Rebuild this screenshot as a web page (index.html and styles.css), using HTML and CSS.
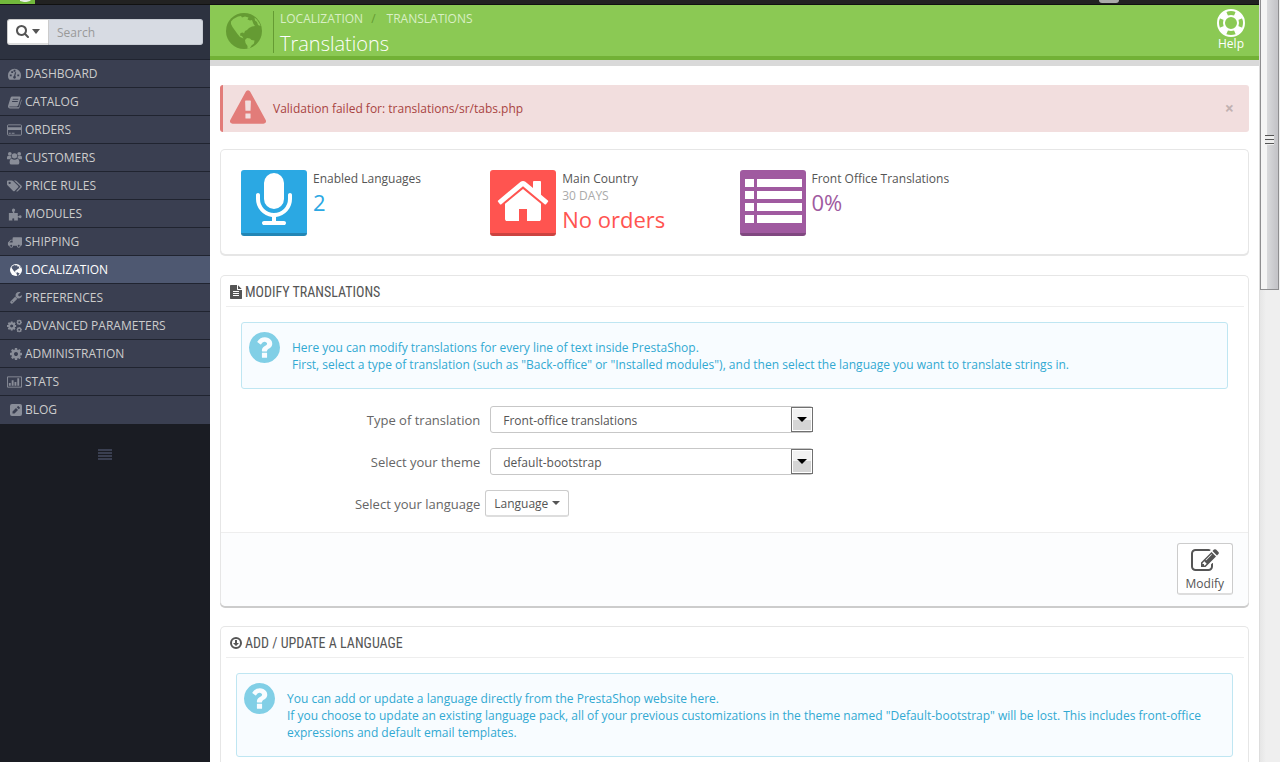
FILE: index.html
```html
<!DOCTYPE html>
<html lang="en">
<head>
    <meta charset="utf-8">
    <title>Translations</title>
    <link rel="stylesheet" href="styles.css">
</head>
<body>
    <svg class="sprite" aria-hidden="true">
        <symbol id="globe" viewBox="0 0 36 36">
            <circle cx="18" cy="18" r="18" fill="currentColor"/>
            <path class="land" d="M5 8.500Q8 5 12 3.500l3-.5 1 1.500 3-1 3.500 1-1 2 2.500 1 2-.5 1.500 4 1.500 2-3 .5-3 1.500-2 2-2 1-1 2.500-1-1-2.500.5-.5 2.500 2 .5 1.500 2.500-3.500-1.500-2.500-3L9 17.500 6.500 14 5 11zM19 27l2-2 3 .5 1.500 1.500 3 .5-.5 3-2.500 2-1.500 2.500-2.500 1 0-3-2-3zM28.500 4.500Q33 8 34.500 13l-2.500-1-1-3-2-1.500z"/>
        </symbol>
        <symbol id="question" viewBox="128 128 1536 1536">
            <path fill="currentColor" d="M1024 1376v-192q0-14-9-23t-23-9h-192q-14 0-23 9t-9 23v192q0 14 9 23t23 9h192q14 0 23-9t9-23zm256-672q0-88-55.5-163t-138.5-116-170-41q-243 0-371 213-15 24 8 42l132 100q7 6 19 6 16 0 25-12 53-68 86-92 34-24 86-24 48 0 85.5 26t37.5 59q0 38-20 61t-68 45q-63 28-115.5 86.5t-52.5 125.5v36q0 14 9 23t23 9h192q14 0 23-9t9-23q0-19 21.5-49.5t54.5-49.5q32-18 49-28.5t46-35 44.5-48 28-60.5 12.5-81zm384 192q0 209-103 385.5t-279.5 279.5-385.5 103-385.5-103-279.5-279.5-103-385.5 103-385.5 279.5-279.5 385.5-103 385.5 103 279.5 279.5 103 385.5z"/>
        </symbol>
        <symbol id="cog" viewBox="128 128 1536 1536">
            <path fill="currentColor" d="M1152 896q0-106-75-181t-181-75-181 75-75 181 75 181 181 75 181-75 75-181zm512-109v222q0 12-8 23t-20 13l-185 28q-19 54-39 91 35 50 107 138 10 12 10 25t-9 23q-27 37-99 108t-94 71q-12 0-26-9l-138-108q-44 23-91 38-16 136-29 186-7 28-36 28h-222q-14 0-24.5-8.5t-11.5-21.5l-28-184q-49-16-90-37l-141 107q-10 9-25 9-14 0-25-11-126-114-165-168-7-10-7-23 0-12 8-23 15-21 51-66.5t54-70.5q-27-50-41-99l-183-27q-13-2-21-12.5t-8-23.5v-222q0-12 8-23t19-13l186-28q14-46 39-92-40-57-107-138-10-12-10-24 0-10 9-23 26-36 98.5-107.5t94.5-71.5q13 0 26 10l138 107q44-23 91-38 16-136 29-186 7-28 36-28h222q14 0 24.5 8.5t11.5 21.5l28 184q49 16 90 37l142-107q9-9 24-9 13 0 25 10 129 119 165 170 7 8 7 22 0 12-8 23-15 21-51 66.5t-54 70.5q26 50 41 98l183 28q13 2 21 12.5t8 23.5z"/>
        </symbol>
    </svg>

    <div class="topbar">
        <span class="logo"><svg viewBox="0 0 35 4"><path d="M20 0h11q-2 2-7 2l-4-1z" fill="#e9efe4"/></svg></span>
        <span class="avatar"></span>
    </div>

    <div class="layout">
        <nav class="sidebar">
            <form class="search">
                <button type="button" class="search-type" aria-label="Search in">
                    <svg width="13" height="13" viewBox="64 128 1664 1664"><path fill="currentColor" d="M1216 832q0-185-131.5-316.5t-316.5-131.5-316.5 131.5-131.5 316.5 131.5 316.5 316.5 131.5 316.5-131.5 131.5-316.5zm512 832q0 52-38 90t-90 38q-54 0-90-38l-343-342q-179 124-399 124-143 0-273.5-55.5t-225-150-150-225-55.5-273.5 55.5-273.5 150-225 225-150 273.5-55.5 273.5 55.5 225 150 150 225 55.5 273.5q0 220-124 399l343 343q37 37 37 90z"/></svg>
                    <span class="caret"></span>
                </button>
                <input type="text" placeholder="Search" aria-label="Search">
            </form>
            <ul class="menu">
                <li><a href="#"><svg viewBox="0 0 16 14"><path fill-rule="evenodd" fill="currentColor" d="M8 1.500a7 7 0 0 1 7 7q0 2.200-1.200 4.100-.2.400-.6.400H2.800q-.4 0-.6-.4A7 7 0 0 1 1 8.500a7 7 0 0 1 7-7zM3 7.500v2h2v-2zM4.500 4v2h2V4zM7 2.500v2h2v-2zM11 7.500v2h2v-2zM8.500 5l-1 4q-1 .5-1 1.500a1.500 1.500 0 0 0 3 0q0-.8-.7-1.300l1-4z"/></svg>DASHBOARD</a></li>
                <li><a href="#"><svg viewBox="0 0 16 14"><path fill-rule="evenodd" fill="currentColor" d="M5.500 1H13.500q1.300.3 1 1.500l-2.500 8q-.5 1.200-1.500 1.200H3q-.8 0-.6.6.2.400 1 .4h8.200q1 0 1.400-1L15.300 4q.5 1 .2 1.800L13.200 13q-.4 1-1.400 1H3Q1 13.500 1 11.500L3.800 2.500Q4.300 1 5.500 1zM6.300 3.500L6 4.500h6l.3-1zM5.600 6l-.3 1h6l.3-1z"/></svg>CATALOG</a></li>
                <li><a href="#"><svg viewBox="0 0 16 14"><path d="M1.500 1.500h13q1 0 1 1v9q0 1-1 1h-13q-1 0-1-1v-9q0-1 1-1z" fill="none" stroke="currentColor"/><path fill="currentColor" d="M1 4h14v3H1zM2 10h2v1H2zM5 10h3v1H5z"/></svg>ORDERS</a></li>
                <li><a href="#"><svg viewBox="0 0 16 14"><g fill="currentColor"><circle cx="3" cy="2.500" r="2"/><circle cx="13" cy="2.500" r="2"/><path d="M0 8V6.500Q0 4.500 1.400 4.500L4.500 5 4.700 7Q3.600 7.300 3 8.300L1 8.400Q0 8.400 0 8zM16 8V6.500q0-2-1.400-2L11.500 5l-.2 2q1.100.3 1.700 1.300l2 .1q1 0 1-.4z"/><circle cx="8" cy="4.700" r="2.900"/><path d="M4.800 7.500Q8 10 11.200 7.500q2 .7 2 4.500 0 2-2 2H4.800q-2 0-2-2 0-3.800 2-4.500z"/></g></svg>CUSTOMERS</a></li>
                <li><a href="#"><svg viewBox="0 0 16 14"><path fill-rule="evenodd" fill="currentColor" d="M0 2q0-1 1-1h4q1 0 1.800.8l5 5q.9.900 0 1.800l-3.600 3.600q-.8.800-1.700 0l-5.700-5.700Q0 5.800 0 5zM2.800 2.500a1.200 1.200 0 1 0 .01 0zM7.500 1H9q.8 0 1.500.8l5 5q.9.900 0 1.800l-4 4q-.9.600-1.700-.1l4-4.100q.8-.8 0-1.500z"/></svg>PRICE RULES</a></li>
                <li><a href="#"><svg viewBox="0 0 16 14"><path fill="currentColor" d="M2 6h4q.6-.1.2-1Q5 3.800 5.300 2.500 6 1 7 1q1.500.1 1.700 1.500 0 1.200-.9 2-.5 1 .4 1.300l3.300.2v3q.2.700 1 .2 1-1 2-.8 1 .2 1.100 1.500-.1 1.400-1.300 1.500-1 0-1.600-.7-1-.7-1.200.2l.1 3.100H7.800q-.6-.2-.2-1 .9-1.400-.9-1.600-1.800.2-1 1.600.6.800-.2 1H2z"/></svg>MODULES</a></li>
                <li><a href="#"><svg viewBox="0 0 16 14"><path fill-rule="evenodd" fill="currentColor" d="M7 2h8.300q.7 0 .7.700V10q0 1-1.500 1a2 2 0 0 1-4 0H6.500a2 2 0 0 1-4 0H2q-1 0-1-1V7.500L3.500 5 4 4.500h2V2.700Q6 2 7 2zM2.500 7.500H6v-2H4.400zM4.500 10a1 1 0 1 0 .01 0zM12.500 10a1 1 0 1 0 .01 0z"/></svg>SHIPPING</a></li>
                <li class="active"><a href="#"><svg class="small"><use href="#globe"/></svg>LOCALIZATION</a></li>
                <li><a href="#"><svg class="small" viewBox="64 128 1664 1664"><path fill="currentColor" d="M448 1472q0-26-19-45t-45-19-45 19-19 45 19 45 45 19 45-19 19-45zm644-420l-682 682q-37 37-90 37-52 0-91-37l-106-108q-38-36-38-90 0-53 38-91l681-681q39 98 114.500 173.500t173.500 114.500zm634-435q0 39-23 106-47 134-164.500 217.500t-258.500 83.500q-185 0-316.500-131.500t-131.500-316.500 131.500-316.500 316.500-131.500q58 0 121.500 16.500t107.500 46.500q16 11 16 28t-16 28l-293 169v224l193 107q5-3 79-48.500t135.500-81 70.500-35.500q15 0 23.500 10t8.500 25z"/></svg>PREFERENCES</a></li>
                <li><a href="#"><svg viewBox="0 0 16 14"><use href="#cog" x="0" y="2" width="10" height="10"/><use href="#cog" x="10" y="0" width="6" height="6"/><use href="#cog" x="10" y="8" width="6" height="6"/></svg>ADVANCED PARAMETERS</a></li>
                <li><a href="#"><svg class="small"><use href="#cog"/></svg>ADMINISTRATION</a></li>
                <li><a href="#"><svg viewBox="0 0 16 14"><path d="M.5 1.500h15v11H.5z" fill="none" stroke="currentColor"/><path fill="currentColor" d="M2 8h2v3H2zM5 5h2v6H5zM8 7h2v4H8zM11 3h2v8h-2z"/></svg>STATS</a></li>
                <li><a href="#"><svg class="small" viewBox="0 0 12 12"><path fill-rule="evenodd" fill="currentColor" d="M2 0h8q2 0 2 2v8q0 2-2 2H2q-2 0-2-2V2q0-2 2-2zM2.500 7.500v2h2L8 6 6 4zM6.800 3.200l2 2 1-1q.4-.4 0-.8L8.600 2.200q-.4-.4-.8 0z"/></svg>BLOG</a></li>
            </ul>
            <button type="button" class="collapse" aria-label="Collapse menu"><span></span></button>
        </nav>

        <main class="main">
            <header class="page-head">
                <svg class="head-icon"><use href="#globe"/></svg>
                <div class="head-title">
                    <div class="breadcrumb"><a href="#">LOCALIZATION</a><span>/</span><a href="#">TRANSLATIONS</a></div>
                    <h1>Translations</h1>
                </div>
                <a href="#" class="help">
                    <svg width="28" height="28" viewBox="0 0 28 28" fill="none" stroke="currentColor"><circle cx="14" cy="14" r="13" stroke-width="2"/><circle cx="14" cy="14" r="7" stroke-width="2"/><circle cx="14" cy="14" r="10" stroke-width="6" pathLength="8" stroke-dasharray="1 1" stroke-dashoffset="-.5"/></svg>
                    Help
                </a>
            </header>

            <div class="content">
                <div class="alert">
                    <svg width="36" height="34" viewBox="0 0 1792 1664"><path fill="currentColor" d="M1024 1375v-190q0-14-9.500-23.500t-22.500-9.500h-192q-13 0-22.500 9.500t-9.500 23.500v190q0 14 9.500 23.500t22.500 9.500h192q13 0 22.500-9.500t9.500-23.500zm-2-374l18-459q0-12-10-19-13-11-24-11h-220q-11 0-24 11-10 7-10 21l17 457q0 10 10 16.500t24 6.500h185q14 0 23.500-6.500t10.500-16.500zm-14-934l768 1408q35 63-2 126-17 29-46.500 46t-63.500 17h-1536q-34 0-63.500-17t-46.500-46q-37-63-2-126l768-1408q17-31 47-49t65-18 65 18 47 49z"/></svg>
                    <span>Validation failed for: translations/sr/tabs.php</span>
                    <button type="button" class="close" aria-label="Close">×</button>
                </div>

                <section class="panel kpis">
                    <div class="kpi blue">
                        <div class="kpi-icon"><svg width="56" height="56" viewBox="0 0 1792 1792"><path fill="currentColor" d="M1472 704v128q0 221-147.500 384.500t-364.500 187.500v132h256q26 0 45 19t19 45-19 45-45 19h-640q-26 0-45-19t-19-45 19-45 45-19h256v-132q-217-24-364.500-187.500t-147.500-384.500v-128q0-26 19-45t45-19 45 19 19 45v128q0 185 131.500 316.500t316.500 131.500 316.500-131.500 131.500-316.500v-128q0-26 19-45t45-19 45 19 19 45zm-256-384v512q0 132-94 226t-226 94-226-94-94-226v-512q0-132 94-226t226-94 226 94 94 226z"/></svg></div>
                        <div><div class="kpi-title">Enabled Languages</div><div class="kpi-value">2</div></div>
                    </div>
                    <div class="kpi red">
                        <div class="kpi-icon"><svg width="56" height="56" viewBox="0 0 1792 1792"><path fill="currentColor" d="M1472 992v480q0 26-19 45t-45 19h-384v-384h-256v384h-384q-26 0-45-19t-19-45v-480q0-1 .5-3t.5-3l575-474 575 474q1 2 1 6zm223-69l-62 74q-8 9-21 11h-3q-13 0-21-7l-692-577-692 577q-12 8-24 7-13-2-21-11l-62-74q-8-10-7-23.500t11-21.500l719-599q32-26 76-26t76 26l244 204v-195q0-14 9-23t23-9h192q14 0 23 9t9 23v408l219 182q10 8 11 21.500t-7 23.500z"/></svg></div>
                        <div><div class="kpi-title">Main Country</div><div class="kpi-sub">30 DAYS</div><div class="kpi-value">No orders</div></div>
                    </div>
                    <div class="kpi purple">
                        <div class="kpi-icon"><svg width="58" height="46" viewBox="0 0 58 46"><path fill="currentColor" d="M1 1h9v8H1zM13 1h45v8H13zM1 13h9v8H1zM13 13h45v8H13zM1 25h9v8H1zM13 25h45v8H13zM1 37h9v8H1zM13 37h45v8H13z"/></svg></div>
                        <div><div class="kpi-title">Front Office Translations</div><div class="kpi-value">0%</div></div>
                    </div>
                </section>

                <form class="panel">
                    <h2><svg width="12" height="14" viewBox="128 0 1536 1792"><path fill="currentColor" d="M1596 476q14 14 28 36h-472v-472q22 14 36 28zm-476 164h544v1056q0 40-28 68t-68 28h-1344q-40 0-68-28t-28-68v-1600q0-40 28-68t68-28h800v544q0 40 28 68t68 28zm160 736v-64q0-14-9-23t-23-9h-704q-14 0-23 9t-9 23v64q0 14 9 23t23 9h704q14 0 23-9t9-23zm0-256v-64q0-14-9-23t-23-9h-704q-14 0-23 9t-9 23v64q0 14 9 23t23 9h704q14 0 23-9t9-23zm0-256v-64q0-14-9-23t-23-9h-704q-14 0-23 9t-9 23v64q0 14 9 23t23 9h704q14 0 23-9t9-23z"/></svg>MODIFY TRANSLATIONS</h2>
                    <div class="panel-body inset">
                        <div class="info">
                            <svg width="31" height="31"><use href="#question"/></svg>
                            <p>Here you can modify translations for every line of text inside PrestaShop.<br>First, select a type of translation (such as "Back-office" or "Installed modules"), and then select the language you want to translate strings in.</p>
                        </div>
                    </div>
                    <div class="fields">
                        <div class="field">
                            <label for="type">Type of translation</label>
                            <div class="select"><select id="type"><option>Front-office translations</option></select></div>
                        </div>
                        <div class="field">
                            <label for="theme">Select your theme</label>
                            <div class="select"><select id="theme"><option>default-bootstrap</option></select></div>
                        </div>
                        <div class="field">
                            <label for="language">Select your language</label>
                            <div><button type="button" id="language" class="btn" aria-label="Language">Language <span class="caret"></span></button></div>
                        </div>
                    </div>
                    <footer class="panel-footer">
                        <button type="button" class="btn modify">
                            <svg width="28" height="28" viewBox="0 0 1792 1792"><path fill="currentColor" d="M888 1184l116-116-152-152-116 116v56h96v96h56zm440-720q-16-16-33 1l-350 350q-17 17-1 33t33-1l350-350q17-17 1-33zm80 594v190q0 119-84.500 203.500t-203.500 84.500h-832q-119 0-203.500-84.500t-84.500-203.500v-832q0-119 84.500-203.500t203.500-84.500h832q63 0 117 25 15 7 18 23 3 17-9 29l-49 49q-14 14-32 8-23-6-45-6h-832q-66 0-113 47t-47 113v832q0 66 47 113t113 47h832q66 0 113-47t47-113v-126q0-13 9-22l64-64q15-15 35-7t20 29zm-96-738l288 288-672 672h-288v-288zm444 132l-92 92-288-288 92-92q28-28 68-28t68 28l152 152q28 28 28 68t-28 68z"/></svg>
                            Modify
                        </button>
                    </footer>
                </form>

                <section class="panel">
                    <h2><svg width="12" height="12" viewBox="0 0 12 12"><circle cx="6" cy="6" r="5" fill="none" stroke="currentColor" stroke-width="2"/><path fill="currentColor" d="M5 3h2v3h2L6 9 3 6h2z"/></svg>ADD / UPDATE A LANGUAGE</h2>
                    <div class="panel-body">
                        <div class="info">
                            <svg width="31" height="31"><use href="#question"/></svg>
                            <p>You can add or update a language directly from the PrestaShop website here.<br>If you choose to update an existing language pack, all of your previous customizations in the theme named "Default-bootstrap" will be lost. This includes front-office expressions and default email templates.</p>
                        </div>
                    </div>
                </section>
            </div>
        </main>

        <div class="scrollbar"><div class="thumb"><span></span></div></div>
    </div>
</body>
</html>
```

FILE: styles.css
```css
:root {
    --text: #555;
    --green: #8bc954;
    --green-dark: #72b136;
    --menu: #3a3f51;
    --line: #e6e6e6;
}

*, *::before, *::after {
    box-sizing: border-box;
}

body {
    margin: 0;
    height: 100vh;
    display: flex;
    flex-direction: column;
    overflow: hidden;
    font-family: "Open Sans", "Noto Sans", sans-serif;
    font-size: 12px;
    line-height: 17px;
    color: var(--text);
    background: #fff;
}

button, input, select {
    font: inherit;
    color: inherit;
}

a {
    color: inherit;
    text-decoration: none;
}

svg {
    display: block;
    flex: none;
}

.sprite {
    position: absolute;
    width: 0;
    height: 0;
}

.land {
    fill: var(--land);
}

.caret {
    display: inline-block;
    border: 4px solid transparent;
    border-top-color: currentColor;
    border-bottom: 0;
}

/* top bar */
.topbar {
    flex: none;
    display: flex;
    justify-content: space-between;
    height: 5px;
    background: #222;
    border-bottom: 1px solid #111;
}

.logo {
    width: 35px;
    height: 4px;
    background: #72b93c;
}

.avatar {
    width: 20px;
    height: 3px;
    margin-right: 161px;
    border-radius: 0 0 10px 10px;
    background: #aaa;
}

.layout {
    flex: 1;
    min-height: 0;
    display: flex;
}

/* sidebar */
.sidebar {
    flex: none;
    width: 210px;
    background: #1a1c23;
}

.search {
    display: flex;
    height: 55px;
    padding: 14px 7px;
    background: #2d3240;
    border-bottom: 1px solid #202430;
}

.search-type {
    display: flex;
    align-items: center;
    gap: 3px;
    width: 42px;
    padding: 0 8px;
    border: 1px solid #ccc;
    border-bottom: 2px solid #ddd;
    border-radius: 3px 0 0 3px;
    background: #fff;
}

.search-type .caret {
    border-width: 5px 4px 0;
}

.search input {
    flex: 1;
    min-width: 0;
    padding: 0 8px;
    border: 1px solid #c7cbd3;
    border-left: 0;
    border-radius: 0 3px 3px 0;
    background: #d7dbe3;
}

.search input::placeholder {
    color: #999;
}

.menu {
    margin: 0;
    padding: 0;
    list-style: none;
}

.menu a {
    display: flex;
    align-items: center;
    gap: 3px;
    height: 28px;
    padding: 0 7px;
    background: var(--menu);
    border-bottom: 1px solid #202430;
    color: #ccc;
}

.menu li:last-child a {
    border-bottom-color: var(--menu);
}

.menu svg {
    width: 15px;
    height: 14px;
    color: #898d98;
}

.menu .small {
    width: 12px;
    height: 12px;
    margin-left: 3px;
}

.menu .active a {
    --land: #4e5871;
    background: #4e5871;
    color: #fff;
}

.menu .active svg {
    color: #fff;
}

.collapse {
    display: block;
    margin: 25px auto 0;
    padding: 0;
    border: 0;
    background: none;
}

.collapse span {
    display: block;
    width: 14px;
    height: 11px;
    background: repeating-linear-gradient(#3a3f51 0 2px, transparent 2px 3px);
}

/* page head */
.main {
    flex: 1;
    min-width: 0;
}

.page-head {
    --land: var(--green);
    display: flex;
    height: 55px;
    padding: 0 14px 0 16px;
    background: var(--green);
    border-bottom: 4px solid var(--green-dark);
    box-shadow: 0 6px #d9d9d9;
    color: #fff;
}

.head-icon {
    width: 36px;
    height: 36px;
    margin: 8px 11px 0 0;
    color: #659b33;
}

.head-title {
    flex: 1;
    height: 42px;
    margin-top: 6px;
    padding-left: 6px;
    border-left: 1px solid #659b33;
}

.breadcrumb {
    height: 17px;
    line-height: 16px;
    color: #d9efc5;
}

.breadcrumb span {
    padding: 0 11px 0 8px;
    color: #659b33;
}

h1 {
    margin: 0;
    font-size: 20px;
    font-weight: 300;
    line-height: 32px;
}

.help {
    display: flex;
    flex-direction: column;
    align-items: center;
    padding-top: 4px;
    line-height: 14px;
}

/* content */
.content {
    padding: 25px 10px 0;
}

.alert {
    display: flex;
    align-items: center;
    gap: 7px;
    height: 47px;
    margin-bottom: 17px;
    padding: 0 15px 0 7px;
    border-left: 3px solid #e27c79;
    border-radius: 3px;
    background: #f2dede;
    color: #a94442;
}

.alert svg {
    color: #e27c79;
    margin-bottom: 3px;
}

.close {
    margin-left: auto;
    padding: 0;
    border: 0;
    background: none;
    font-size: 16px;
    font-weight: 700;
    color: #c1b1b1;
}

.panel {
    margin-bottom: 20px;
    border: 1px solid var(--line);
    border-bottom: 0;
    border-radius: 5px;
    box-shadow: 0 2px #ccc;
    background: #fff;
}

.kpis {
    display: grid;
    grid-template-columns: repeat(4, 1fr);
    padding: 20px 15px 18px;
    box-shadow: 0 2px var(--line);
    margin-bottom: 21px;
}

.kpi {
    display: flex;
    gap: 6px;
    padding: 0 5px;
}

.kpi-icon {
    display: flex;
    justify-content: center;
    align-items: center;
    width: 66px;
    height: 66px;
    padding-bottom: 2px;
    border-bottom: 3px solid rgba(0, 0, 0, 0.2);
    border-radius: 3px;
    background: var(--kpi);
    background-clip: border-box;
    color: #fff;
}

.blue {
    --kpi: #2ba8e3;
}

.red {
    --kpi: #ff5450;
}

.purple {
    --kpi: #a05aa0;
}

.kpi-sub {
    color: #aaa;
}

.kpi-value {
    font-size: 22px;
    line-height: 30px;
    color: var(--kpi);
}

h2 {
    display: flex;
    align-items: center;
    gap: 3px;
    height: 31px;
    margin: 0 4px 0 5px;
    padding: 2px 4px 0;
    border-bottom: 1px solid #eee;
    font-family: "Ubuntu Condensed", "Roboto Condensed", "Open Sans Condensed", Roboto, sans-serif;
    font-size: 14px;
    font-weight: 400;
}

.panel-body {
    padding: 15px;
}

.inset {
    padding: 15px 20px 17px;
}

.info {
    display: flex;
    gap: 12px;
    padding: 9px 20px 15px 7px;
    border: 1px solid #bfe6f2;
    border-radius: 3px;
    background: #f8fcff;
    color: #31a9d2;
}

.info svg {
    color: #81cfe6;
}

.info p {
    margin: 7px 0 0;
}

.fields {
    display: flex;
    flex-direction: column;
    gap: 15px;
    padding: 0 15px 15px;
}

.field {
    display: grid;
    grid-template-columns: 3fr 4fr 5fr;
    align-items: center;
}

.field label {
    padding: 2px 5px 0 0;
    text-align: right;
    font-size: 13px;
    color: #666;
}

.select {
    position: relative;
    margin: 0 5px;
}

.select select {
    display: block;
    width: 100%;
    height: 27px;
    padding: 2px 12px 0;
    border: 1px solid #c7c7c7;
    border-radius: 3px;
    background: #fff;
    appearance: none;
}

.select::before {
    content: '';
    position: absolute;
    top: 1px;
    right: 0;
    width: 22px;
    height: 25px;
    border: 1px solid #707070;
    box-shadow: inset 0 0 0 1px #fff;
    background: linear-gradient(#f2f2f2 50%, #d5d5d5 50%);
    pointer-events: none;
}

.select::after {
    content: '';
    position: absolute;
    top: 11px;
    right: 6px;
    border: 5px solid transparent;
    border-top-color: #000;
    border-bottom: 0;
    pointer-events: none;
}

.btn {
    display: flex;
    align-items: center;
    gap: 4px;
    height: 27px;
    padding: 0 8px;
    border: 1px solid #ccc;
    border-bottom: 2px solid #ddd;
    border-radius: 3px;
    background: #fff;
}

.panel-footer {
    display: flex;
    justify-content: flex-end;
    padding: 10px 15px 11px;
    border-top: 1px solid #eee;
    border-radius: 0 0 5px 5px;
    background: #fcfdfe;
}

.modify {
    flex-direction: column;
    gap: 0;
    height: 52px;
    padding: 3px 8px 0;
}

/* page scrollbar */
.scrollbar {
    flex: none;
    width: 21px;
    margin-top: -5px;
    padding-right: 1px;
    border-left: 1px solid #ddd;
    background: linear-gradient(to right, #e6e6e6, #efefef 30%);
}

.thumb {
    display: flex;
    justify-content: center;
    align-items: center;
    height: 38%;
    padding-bottom: 8px;
    border: 1px solid #8e8e90;
    border-top: 0;
    background: linear-gradient(to right, #f5f5f5 35%, #d9dadc 36%, #c5c5c9 90%);
}

.thumb span {
    width: 9px;
    height: 10px;
    background: repeating-linear-gradient(#555 0 1px, #eee 1px 4px);
}
```
